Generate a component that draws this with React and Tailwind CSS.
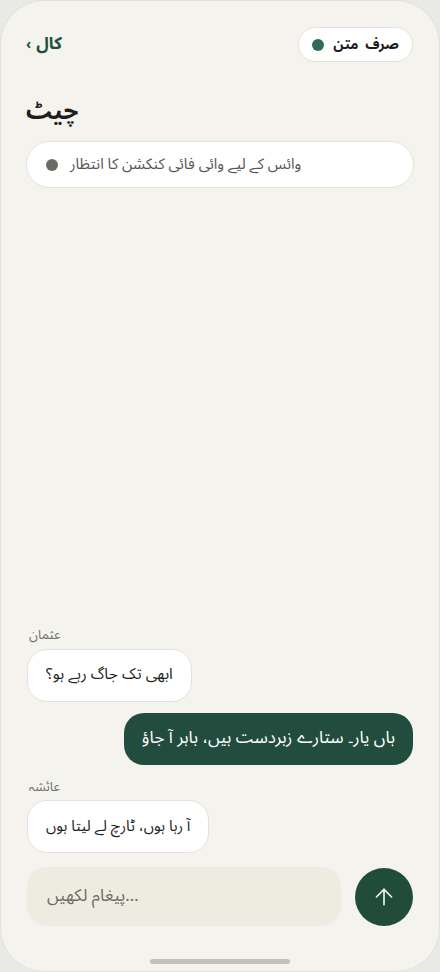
import { ArrowUp } from 'lucide-react'

const font = { fontFamily: '"Noto Sans Arabic", "Noto Naskh Arabic", "Noto Sans", "DejaVu Sans", sans-serif' }

function Bubble({ mine, small, children }) {
  if (mine) {
    return (
      <div className="flex justify-end">
        <div className="h-[52px] px-[18px] flex items-center rounded-[20px] bg-[#224c3d] text-white text-[17px]">
          {children}
        </div>
      </div>
    )
  }
  return (
    <div className="flex">
      <div className={`h-[53px] px-[18px] flex items-center rounded-[20px] bg-white border border-[#e4e2da] text-[#222] ${small ? 'text-[15px]' : 'text-[15.5px]'}`}>
        {children}
      </div>
    </div>
  )
}

export default function App() {
  return (
    <div className="w-[440px] h-[972px] bg-[#e9e9e6]" style={font}>
      <div className="h-full flex flex-col bg-[#f4f3ee] rounded-[44px] border border-[#e2e1dc] overflow-hidden">
        {/* header */}
        <div className="flex items-center justify-between pl-[25px] pr-[26px] pt-[26px]">
          <button className="flex items-center gap-[5px] text-[#1f4d3c] font-bold">
            <span className="text-[14px] leading-none">‹</span>
            <span className="text-[17px]">کال</span>
          </button>
          <div className="h-[35px] flex items-center gap-[9px] pl-[13px] pr-[13px] rounded-full bg-white border border-[#e4e2da]">
            <span className="w-[12px] h-[12px] rounded-full bg-[#2f6c55]" />
            <span className="text-[14px] font-bold text-[#1d1d1d] [word-spacing:3px]">صرف متن</span>
          </div>
        </div>

        <h1 className="mt-[35px] px-[25px] text-[24px] font-bold text-[#1e1e1e] leading-tight">چیٹ</h1>

        <div className="mx-[25px] mt-[14px] h-[47px] flex items-center gap-[12px] px-[19px] rounded-full bg-white border border-[#e4e2da]">
          <span className="w-[12px] h-[12px] rounded-full bg-[#6c6a65]" />
          <span className="text-[15px] text-[#555]">وائس کے لیے وائی فائی کنکشن کا انتظار</span>
        </div>

        {/* messages */}
        <div className="flex-1 flex flex-col justify-end px-[26px] pb-[14px]">
          <div className="text-[13px] text-[#6f6f6f] px-[2px] mb-[3px]">عثمان</div>
          <Bubble>ابھی تک جاگ رہے ہو؟</Bubble>
          <div className="mt-[11px]">
            <Bubble mine>ہاں یار۔ ستارے زبردست ہیں، باہر آ جاؤ</Bubble>
          </div>
          <div className="text-[13px] text-[#6f6f6f] px-[2px] mt-[13px] mb-[3px]">عائشہ</div>
          <Bubble small>آ رہا ہوں، ٹارچ لے لیتا ہوں</Bubble>
        </div>

        {/* composer */}
        <div className="flex items-center gap-[14px] px-[26px]">
          <div className="flex-1 h-[59px] flex items-center px-[20px] rounded-[20px] bg-[#eeebe0] text-[17px] text-[#6e6d68]">
            پیغام لکھیں…
          </div>
          <button className="w-[58px] h-[58px] rounded-full bg-[#214c3c] flex items-center justify-center text-[#e8f0ec]">
            <ArrowUp size={26} strokeWidth={1.6} />
          </button>
        </div>

        <div className="flex justify-center pt-[33px] pb-[7px]">
          <div className="w-[140px] h-[5px] rounded-full bg-[#c2c1bd]" />
        </div>
      </div>
    </div>
  )
}
